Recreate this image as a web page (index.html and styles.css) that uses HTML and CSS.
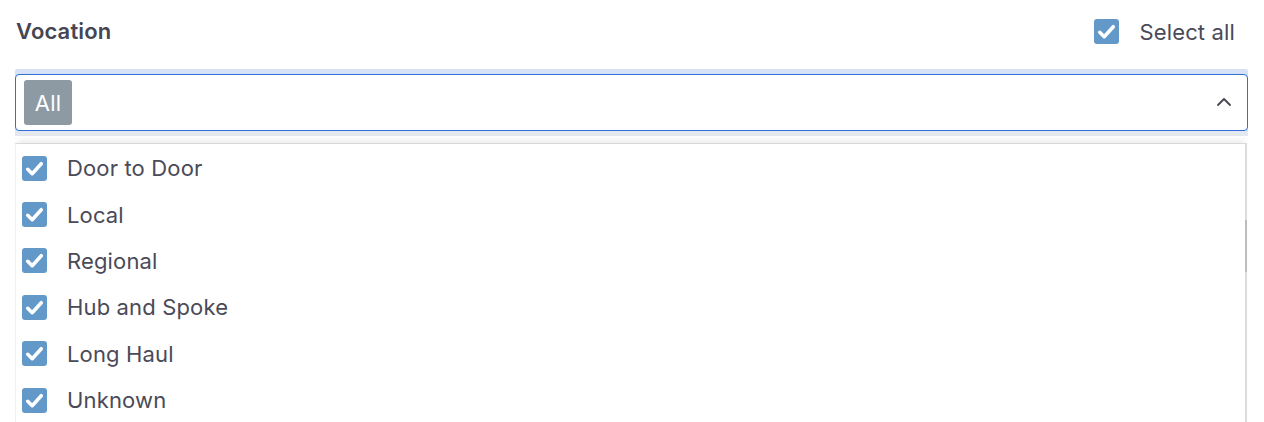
FILE: index.html
```html
<!DOCTYPE html>
<html>
<head>
<meta charset="utf-8">
<link rel="stylesheet" href="styles.css">
</head>
<body>
<div class="field">
  <div class="header">
    <span class="label">Vocation</span>
    <label class="select-all">
      <span class="box"><svg viewBox="0 0 24 24" width="25" height="25"><path d="M5.5 12.8l4.3 4.2 8.7-9.6" fill="none" stroke="#fff" stroke-width="3.4" stroke-linecap="round" stroke-linejoin="round"/></svg></span>
      <span class="sa-text">Select all</span>
    </label>
  </div>
  <div class="ring">
    <div class="control">
      <span class="chip">All</span>
      <svg class="chev" viewBox="0 0 16 10" width="16" height="10"><path d="M2 8l6-6 6 6" fill="none" stroke="#444650" stroke-width="1.8" stroke-linecap="round" stroke-linejoin="round"/></svg>
    </div>
  </div>
  <div class="under"></div>
  <div class="menu">
    <ul class="options">
      <li class="opt"><span class="box"><svg viewBox="0 0 24 24" width="25" height="25"><path d="M5.5 12.8l4.3 4.2 8.7-9.6" fill="none" stroke="#fff" stroke-width="3.4" stroke-linecap="round" stroke-linejoin="round"/></svg></span><span>Door to Door</span></li>
      <li class="opt"><span class="box"><svg viewBox="0 0 24 24" width="25" height="25"><path d="M5.5 12.8l4.3 4.2 8.7-9.6" fill="none" stroke="#fff" stroke-width="3.4" stroke-linecap="round" stroke-linejoin="round"/></svg></span><span>Local</span></li>
      <li class="opt"><span class="box"><svg viewBox="0 0 24 24" width="25" height="25"><path d="M5.5 12.8l4.3 4.2 8.7-9.6" fill="none" stroke="#fff" stroke-width="3.4" stroke-linecap="round" stroke-linejoin="round"/></svg></span><span>Regional</span></li>
      <li class="opt"><span class="box"><svg viewBox="0 0 24 24" width="25" height="25"><path d="M5.5 12.8l4.3 4.2 8.7-9.6" fill="none" stroke="#fff" stroke-width="3.4" stroke-linecap="round" stroke-linejoin="round"/></svg></span><span>Hub and Spoke</span></li>
      <li class="opt"><span class="box"><svg viewBox="0 0 24 24" width="25" height="25"><path d="M5.5 12.8l4.3 4.2 8.7-9.6" fill="none" stroke="#fff" stroke-width="3.4" stroke-linecap="round" stroke-linejoin="round"/></svg></span><span>Long Haul</span></li>
      <li class="opt"><span class="box"><svg viewBox="0 0 24 24" width="25" height="25"><path d="M5.5 12.8l4.3 4.2 8.7-9.6" fill="none" stroke="#fff" stroke-width="3.4" stroke-linecap="round" stroke-linejoin="round"/></svg></span><span>Unknown</span></li>
    </ul>
    <span class="thumb"></span>
  </div>
</div>
</body>
</html>
```

FILE: styles.css
```css
html, body {
  margin: 0;
  padding: 0;
  background: #fff;
  height: 422px;
  overflow: hidden;
}
body {
  font-family: Inter, "Noto Sans", sans-serif;
  color: #4a4a58;
  letter-spacing: 0.15px;
}
.field {
  padding: 0 16px 0 15px;
}
.header {
  display: flex;
  align-items: center;
  justify-content: space-between;
  height: 62px;
  padding: 0 13px 0 1px;
}
.label {
  font-size: 22px;
  font-weight: 600;
  color: #454553;
}
.select-all {
  display: flex;
  align-items: center;
  gap: 20px;
  font-size: 22px;
  color: #4a4a58;
  padding-top: 1px;
}
.box {
  width: 25px;
  height: 25px;
  border-radius: 3px;
  background: #6399c8;
  display: inline-flex;
  align-items: center;
  justify-content: center;
  flex: none;
}
.box svg { display: block; }
.ring {
  margin-top: 7px;
  background: #d6e2f5;
  padding: 5px 0 0;
  border-radius: 2px 2px 0 0;
}
.control {
  height: 55px;
  border: 1px solid #2e6fd9;
  border-radius: 4px;
  background: #fff;
  display: flex;
  align-items: center;
  justify-content: space-between;
  padding: 0 15px 0 8px;
}
.chip {
  width: 48px;
  height: 45px;
  border-radius: 3px;
  background: #8d9aa3;
  color: #fff;
  font-size: 22px;
  display: flex;
  align-items: center;
  justify-content: center;
}
.chev { display: block; margin-top: -2px; }
.under {
  height: 5px;
  background: #e4e9f0;
}
.menu {
  position: relative;
  margin-top: 7px;
  margin-right: 1px;
  background: #fff;
  border-top: 1px solid #d9d9d9;
  border-right: 2px solid #dcdcdc;
  border-left: 1px solid #f0f0f0;
  box-shadow: 0 -6px 6px -3px rgba(0,0,0,0.08);
  height: 278px;
}
.options {
  list-style: none;
  margin: 0;
  padding: 0 0 0 6px;
  height: 278px;
  overflow: hidden;
}
.opt {
  display: flex;
  align-items: center;
  gap: 20px;
  height: 46.4px;
  font-size: 22px;
  color: #4a4a58;
}
.opt:first-child { margin-top: 1px; }
.thumb {
  position: absolute;
  right: -2px;
  top: 76px;
  width: 2px;
  height: 52px;
  background: #bdbdbd;
}
```
